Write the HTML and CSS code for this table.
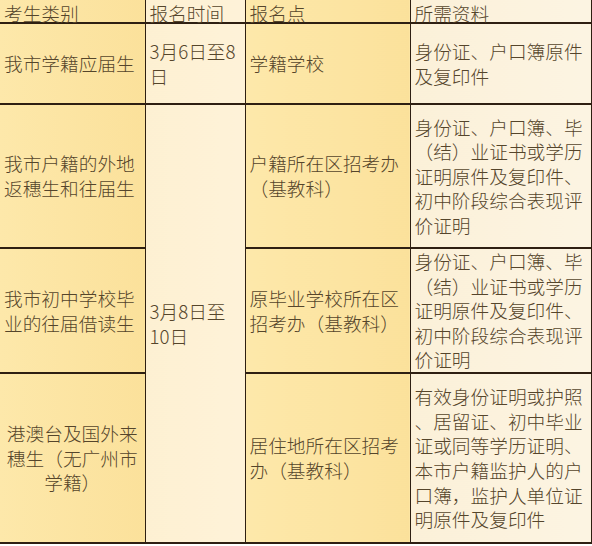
FILE: index.html
```html
<!DOCTYPE html>
<html lang="zh">
<head>
<meta charset="utf-8">
<link rel="stylesheet" href="styles.css">
</head>
<body>
<table class="tbl">
  <colgroup>
    <col class="c1"><col class="c2"><col class="c3"><col class="c4">
  </colgroup>
  <tr class="head">
    <td class="y">考生类别</td>
    <td class="w">报名时间</td>
    <td class="y">报名点</td>
    <td class="p">所需资料</td>
  </tr>
  <tr class="r1">
    <td class="y">我市学籍应届生</td>
    <td class="w">3月6日至8<br>日</td>
    <td class="y">学籍学校</td>
    <td class="p">身份证、户口簿原件<br>及复印件</td>
  </tr>
  <tr class="r2">
    <td class="y">我市户籍的外地<br>返穗生和往届生</td>
    <td class="w" rowspan="3">3月8日至<br>10日</td>
    <td class="y">户籍所在区招考办<br>（基教科）</td>
    <td class="p">身份证、户口簿、毕<br>（结）业证书或学历<br>证明原件及复印件、<br>初中阶段综合表现评<br>价证明</td>
  </tr>
  <tr class="r3">
    <td class="y">我市初中学校毕<br>业的往届借读生</td>
    <td class="y">原毕业学校所在区<br>招考办（基教科）</td>
    <td class="p">身份证、户口簿、毕<br>（结）业证书或学历<br>证明原件及复印件、<br>初中阶段综合表现评<br>价证明</td>
  </tr>
  <tr class="r4">
    <td class="y center">港澳台及国外来<br>穗生（无广州市<br>学籍）</td>
    <td class="y">居住地所在区招考<br>办（基教科）</td>
    <td class="p">有效身份证明或护照<br>、居留证、初中毕业<br>证或同等学历证明、<br>本市户籍监护人的户<br>口簿，监护人单位证<br>明原件及复印件</td>
  </tr>
</table>
</body>
</html>
```

FILE: styles.css
```css
html, body {
  margin: 0;
  padding: 0;
  background: #ffffff;
}

.tbl {
  border-collapse: collapse;
  table-layout: fixed;
  width: 591px;
  font-family: "Noto Sans CJK SC", "Noto Sans", sans-serif;
  font-weight: 300;
  font-size: 18.7px;
  line-height: 24.6px;
  color: #55452b;
}

.c1 { width: 145px; }
.c2 { width: 100px; }
.c3 { width: 165px; }
.c4 { width: 181px; }

.tbl td {
  border-top: 2px solid #2e1f12;
  border-bottom: 2px solid #2e1f12;
  border-left: 1px solid #2e1f12;
  border-right: 1px solid #2e1f12;
  padding: 0 2px 0 4px;
  vertical-align: middle;
  white-space: nowrap;
}

.tbl tr > td:first-child {
  border-left: none;
}

.tbl .head td {
  border-top: none;
  height: 18px;
  padding-top: 3px;
  line-height: 19px;
  vertical-align: top;
}

.r1 td { height: 79px; }
.r2 td { height: 142px; }
.r3 td { height: 123px; }
.r4 td { height: 168px; }

.tbl td.w {
  background: linear-gradient(to right, #fdf0d2, #fef2d8);
}

.tbl td.y {
  background: linear-gradient(to right, #fde8aa, #fbe19b);
}

.tbl td.p {
  background: linear-gradient(to right, #fbf0d8, #fcf4e2);
}

.tbl td.center {
  text-align: center;
  padding: 0 2px;
}
```
